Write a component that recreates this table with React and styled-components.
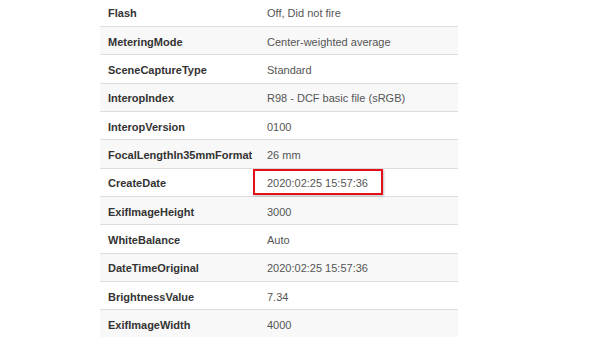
import styled, { createGlobalStyle } from 'styled-components';

const rows = [
  ['Flash', 'Off, Did not fire'],
  ['MeteringMode', 'Center-weighted average'],
  ['SceneCaptureType', 'Standard'],
  ['InteropIndex', 'R98 - DCF basic file (sRGB)'],
  ['InteropVersion', '0100'],
  ['FocalLengthIn35mmFormat', '26 mm'],
  ['CreateDate', '2020:02:25 15:57:36', true],
  ['ExifImageHeight', '3000'],
  ['WhiteBalance', 'Auto'],
  ['DateTimeOriginal', '2020:02:25 15:57:36'],
  ['BrightnessValue', '7.34'],
  ['ExifImageWidth', '4000'],
];

const App = () => {
  return (
    <Page>
      <GlobalStyle />
      <Table>
        {rows.map(([name, value, marked], i) => (
          <Row key={name} $striped={i % 2 === 1}>
            <Label>{name}</Label>
            <Value>
              {value}
              {marked && <Highlight />}
            </Value>
          </Row>
        ))}
      </Table>
    </Page>
  );
};

export default App;

const GlobalStyle = createGlobalStyle`
  html, body {
    margin: 0;
    padding: 0;
    background: #fff;
    overflow: hidden;
  }
`;
const Page = styled.main`
  width: 600px;
  height: 338px;
  padding-left: 100px;
  box-sizing: border-box;
  font-family: 'Liberation Sans', Arial, sans-serif;
  font-size: 11px;
`;
const Table = styled.div`
  width: 358px;
  margin-top: -1.33px;
  display: flex;
  flex-direction: column;
`;
const Row = styled.div`
  height: 28.33px;
  display: grid;
  grid-template-columns: 159px 1fr;
  align-items: center;
  box-sizing: border-box;
  border-bottom: 1px solid #dddddd;
  background-color: ${(p) => (p.$striped ? '#f8f8f8' : '#ffffff')};
`;
const Label = styled.div`
  padding: 2px 0 0 8px;
  font-weight: bold;
  color: #333333;
  white-space: nowrap;
`;
const Value = styled.div`
  position: relative;
  height: 100%;
  display: flex;
  align-items: center;
  padding: 2px 0 0 8px;
  box-sizing: border-box;
  color: #555555;
  white-space: nowrap;
`;
const Highlight = styled.div`
  position: absolute;
  left: -6px;
  top: 0;
  width: 130px;
  height: 26px;
  box-sizing: border-box;
  border: 2px solid #e3101a;
  box-shadow: 1px 1px 2px rgba(0, 0, 0, 0.25);
`;
